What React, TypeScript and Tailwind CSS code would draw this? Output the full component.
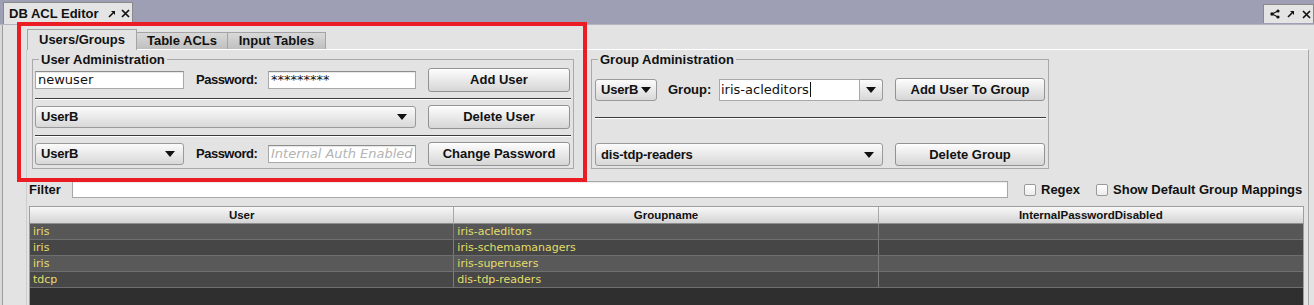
import React from 'react';

const bold = "font-['Liberation_Sans',Arial,sans-serif] font-bold";
const reg = "font-['DejaVu_Sans',sans-serif]";

const Caret = () => (
  <svg width="10" height="6" viewBox="0 0 10 6" className="shrink-0">
    <path d="M0 0h10L5 6z" fill="#111" />
  </svg>
);

const MaxIcon = () => (
  <svg width="8" height="8" viewBox="0 0 8 8">
    <path d="M1 7L5 3" stroke="#111" strokeWidth="1.6" />
    <path d="M3 1h4v4z" fill="#111" />
  </svg>
);

const CloseIcon = () => (
  <svg width="9" height="9" viewBox="0 0 9 9">
    <path d="M1 1l7 7M8 1L1 8" stroke="#111" strokeWidth="1.7" />
  </svg>
);

const ShareIcon = () => (
  <svg width="10" height="10" viewBox="0 0 10 10">
    <path d="M2 5L8 2M2 5l6 3" stroke="#111" strokeWidth="1.1" />
    <circle cx="2" cy="5" r="1.7" fill="#111" />
    <circle cx="8" cy="2" r="1.6" fill="#111" />
    <circle cx="8" cy="8" r="1.6" fill="#111" />
  </svg>
);

const Btn = ({ label, w, h = 'h-[24px]' }: { label: string; w: string; h?: string }) => (
  <div
    className={`${w} ${h} flex shrink-0 items-center justify-center rounded-[3px] border border-[#929292] bg-linear-to-b from-[#fdfdfd] to-[#d6d6d6] text-[13px] text-[#111] shadow-[inset_0_1px_0_#fff] ${bold}`}
  >
    {label}
  </div>
);

const Combo = ({ value, w, h = 'h-[22px]', pr = 'pr-[8px]' }: { value: string; w: string; h?: string; pr?: string }) => (
  <div
    className={`${w} ${h} ${pr} flex shrink-0 items-center justify-between rounded-[3px] border border-[#9a9a9a] bg-linear-to-b from-[#fbfbfb] to-[#d8d8d8] pl-[5px] text-[13px] text-[#111] ${bold}`}
  >
    <span className="tracking-[-0.2px]">{value}</span>
    <Caret />
  </div>
);

const Field = ({ value, w, placeholder }: { value?: string; w: string; placeholder?: string }) => (
  <div
    className={`${w} flex h-[18px] shrink-0 items-center overflow-hidden whitespace-nowrap border border-[#a8a8a8] border-t-[#8c8c8c] bg-white pl-[2px] text-[13px] shadow-[inset_0_1px_1px_rgba(0,0,0,0.1)] ${reg}`}
  >
    {value ? (
      <span className="text-[#111]">{value}</span>
    ) : (
      <span className="italic text-[#b4b4b4]">{placeholder}</span>
    )}
  </div>
);

const Sep = ({ mt }: { mt: string }) => <div className={`${mt} h-[2px] border-t border-[#3c3c3c] border-b border-b-white`} />;

const Label = ({ text, w }: { text: string; w: string }) => (
  <div className={`${w} shrink-0 pl-[12px] text-[13px] tracking-[-0.5px] text-[#111] ${bold}`}>{text}</div>
);

const Check = ({ label, ml }: { label: string; ml: string }) => (
  <div className={`${ml} flex shrink-0 items-center whitespace-nowrap`}>
    <div className="h-[12px] w-[12px] rounded-[2px] border border-[#9a9a9a] bg-linear-to-b from-white to-[#ececec]" />
    <span className={`ml-[5px] text-[13px] text-[#111] ${bold}`}>{label}</span>
  </div>
);

const rows = [
  ['iris', 'iris-acleditors', 'bg-[#575757]'],
  ['iris', 'iris-schemamanagers', 'bg-[#464646]'],
  ['iris', 'iris-superusers', 'bg-[#595959]'],
  ['tdcp', 'dis-tdp-readers', 'bg-[#474747]'],
];

const App: React.FC = () => (
  <div className="relative h-[305px] w-[1314px] overflow-hidden bg-[#9e9eb5]">
    {/* window tab strip */}
    <div className="flex h-[24px] items-end justify-between">
      <div className="ml-[3px] flex h-[22px] w-[130px] items-center border border-b-0 border-[#8a8a8a] bg-[#e4e4e4] pl-[5px]">
        <span className={`text-[13px] text-[#111] ${bold}`}>DB ACL Editor</span>
        <span className="ml-[9px] flex items-center">
          <MaxIcon />
        </span>
        <span className="ml-[5px] flex items-center">
          <CloseIcon />
        </span>
      </div>
      <div className="mb-[1px] flex h-[19px] w-[51px] items-center gap-[7px] border border-b-0 border-[#8a8a8a] bg-[#e4e4e4] pl-[6px]">
        <ShareIcon />
        <MaxIcon />
        <CloseIcon />
      </div>
    </div>

    {/* main panel */}
    <div className="h-[281px] border-t border-[#b4b4c2] bg-[#d9d9d9] pl-[2px]">
      <div className="h-full border-l border-[#9c9c9c] bg-[#e3e3e3] pl-[23px] pr-[5px] pt-[4px]">
        {/* tabs */}
        <div className="flex h-[20px] items-end pl-[1px]">
          <div className={`relative z-10 -mb-px flex h-[21px] w-[110px] items-center justify-center border border-b-0 border-[#a4a4a4] bg-[#e3e3e3] text-[13px] text-[#111] ${bold}`}>
            Users/Groups
          </div>
          <div className={`flex h-[17px] w-[91px] items-center justify-center border border-l-0 border-b-0 border-[#a4a4a4] bg-linear-to-b from-[#d9d9d9] to-[#bfbfbf] text-[13px] text-[#111] ${bold}`}>
            Table ACLs
          </div>
          <div className={`flex h-[17px] w-[98px] items-center justify-center border border-l-0 border-b-0 border-[#a4a4a4] bg-linear-to-b from-[#d9d9d9] to-[#bfbfbf] text-[13px] text-[#111] ${bold}`}>
            Input Tables
          </div>
        </div>

        {/* tab content */}
        <div className="h-[260px] border-l border-r border-t border-l-[#cdcdcd] border-r-[#a8a8a8] border-t-white pt-[2px]">
          <div className="flex items-start pl-[5px]">
            {/* User Administration */}
            <fieldset className="w-[542px] border border-[#a9a9a9] px-[2px] pb-[2px]">
              <legend className={`ml-[4px] px-[2px] text-[13px] leading-[15px] text-[#111] ${bold}`}>User Administration</legend>
              <div className="mt-[1px] flex h-[24px] items-center">
                <Field value="newuser" w="w-[149px]" />
                <Label text="Password:" w="w-[84px]" />
                <Field value="*********" w="w-[148px]" />
                <div className="ml-[12px]">
                  <Btn label="Add User" w="w-[142px]" />
                </div>
              </div>
              <Sep mt="mt-[6px]" />
              <div className="mt-[5px] flex h-[24px] items-center">
                <Combo value="UserB" w="w-[381px]" />
                <div className="ml-[12px]">
                  <Btn label="Delete User" w="w-[142px]" />
                </div>
              </div>
              <Sep mt="mt-[6px]" />
              <div className="mt-[5px] flex h-[24px] items-center">
                <Combo value="UserB" w="w-[149px]" />
                <Label text="Password:" w="w-[84px]" />
                <Field placeholder="Internal Auth Enabled" w="w-[148px]" />
                <div className="ml-[12px]">
                  <Btn label="Change Password" w="w-[142px]" />
                </div>
              </div>
            </fieldset>

            {/* Group Administration */}
            <fieldset className="ml-[17px] w-[458px] border border-[#a9a9a9] pb-[2px] pl-[3px] pr-[2px]">
              <legend className={`ml-[3px] px-[2px] text-[13px] leading-[15px] text-[#111] ${bold}`}>Group Administration</legend>
              <div className="mt-[11px] flex h-[23px] items-center">
                <Combo value="UserB" w="w-[62px]" pr="pr-[5px]" />
                <div className={`ml-[11px] w-[51px] shrink-0 text-[13px] text-[#111] ${bold}`}>Group:</div>
                <div className="flex h-[22px] w-[164px] shrink-0">
                  <div className={`flex flex-1 items-center border border-[#a8a8a8] bg-white pl-[1px] text-[13px] text-[#111] ${reg}`}>
                    iris-acleditors<span className="ml-px h-[15px] w-px bg-[#111]" />
                  </div>
                  <div className="flex w-[23px] items-center justify-center rounded-r-[3px] border border-l-0 border-[#9a9a9a] bg-linear-to-b from-[#fbfbfb] to-[#d8d8d8]">
                    <Caret />
                  </div>
                </div>
                <div className="ml-[12px]">
                  <Btn label="Add User To Group" w="w-[150px]" h="h-[23px]" />
                </div>
              </div>
              <Sep mt="mt-[16px]" />
              <div className="mt-[24px] flex h-[23px] items-center">
                <Combo value="dis-tdp-readers" w="w-[288px]" h="h-[23px]" />
                <div className="ml-[12px]">
                  <Btn label="Delete Group" w="w-[150px]" h="h-[23px]" />
                </div>
              </div>
            </fieldset>
          </div>

          {/* filter row */}
          <div className="mt-[12px] flex h-[17px] items-center pl-[2px]">
            <div className={`w-[43px] shrink-0 text-[13px] text-[#111] ${bold}`}>Filter</div>
            <div className="h-[17px] w-[936px] shrink-0 border border-[#a8a8a8] bg-white shadow-[inset_0_1px_1px_rgba(0,0,0,0.08)]" />
            <Check label="Regex" ml="ml-[16px]" />
            <Check label="Show Default Group Mappings" ml="ml-[16px]" />
          </div>

          {/* table */}
          <div className="ml-[2px] mr-[4px] mt-[8px] border-l border-r border-t border-[#9e9e9e]">
            <div className={`grid h-[17px] grid-cols-3 border-b border-[#8e8e8e] bg-linear-to-b from-[#f8f8f8] to-[#d4d4d4] text-[11.5px] text-[#111] ${bold}`}>
              <div className="flex items-center justify-center border-r border-[#a8a8a8]">User</div>
              <div className="flex items-center justify-center border-r border-[#a8a8a8]">Groupname</div>
              <div className="flex items-center justify-center">InternalPasswordDisabled</div>
            </div>
            {rows.map(([user, group, bg]) => (
              <div key={group} className={`grid h-[16px] grid-cols-3 border-b border-[#6f6f6f] text-[11px] leading-[15px] text-[#e2de6c] ${bg} ${reg}`}>
                <div className="border-r border-[#7d7d7d] pl-[3px]">{user}</div>
                <div className="border-r border-[#7d7d7d] pl-[3px]">{group}</div>
                <div />
              </div>
            ))}
            <div className="h-[40px] bg-[#2f2f2f]" />
          </div>
        </div>
      </div>
    </div>

    {/* red annotation frame */}
    <div className="pointer-events-none absolute left-[17px] top-[22px] h-[160px] w-[570px] border-[4px] border-[#ec1c24]" />
  </div>
);

export default App;
